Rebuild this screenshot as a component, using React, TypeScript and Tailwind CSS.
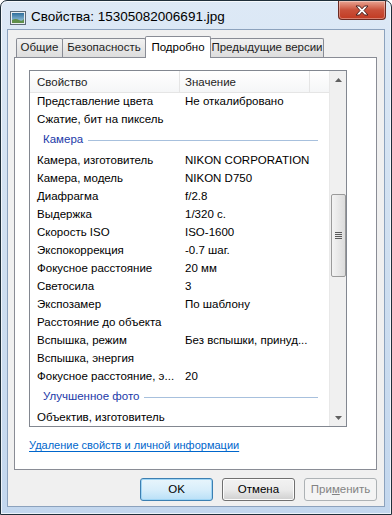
import React from 'react';

type Row = { k?: string; v?: string; group?: string };

const rows: Row[] = [
  { k: 'Представление цвета', v: 'Не откалибровано' },
  { k: 'Сжатие, бит на пиксель', v: '' },
  { group: 'Камера' },
  { k: 'Камера, изготовитель', v: 'NIKON CORPORATION' },
  { k: 'Камера, модель', v: 'NIKON D750' },
  { k: 'Диафрагма', v: 'f/2.8' },
  { k: 'Выдержка', v: '1/320 с.' },
  { k: 'Скорость ISO', v: 'ISO-1600' },
  { k: 'Экспокоррекция', v: '-0.7 шаг.' },
  { k: 'Фокусное расстояние', v: '20 мм' },
  { k: 'Светосила', v: '3' },
  { k: 'Экспозамер', v: 'По шаблону' },
  { k: 'Расстояние до объекта', v: '' },
  { k: 'Вспышка, режим', v: 'Без вспышки, принуд...' },
  { k: 'Вспышка, энергия', v: '' },
  { k: 'Фокусное расстояние, э...', v: '20' },
  { group: 'Улучшенное фото' },
  { k: 'Объектив, изготовитель', v: '' },
];

function FileIcon() {
  return (
    <svg width="16" height="14" viewBox="0 0 16 14">
      <rect x="0.5" y="0.5" width="15" height="13" fill="#e9eef2" stroke="#5d6b78" />
      <defs>
        <linearGradient id="sky" x1="0" y1="0" x2="0" y2="1">
          <stop offset="0" stopColor="#2f6f9c" />
          <stop offset="1" stopColor="#a9d3ea" />
        </linearGradient>
      </defs>
      <rect x="2" y="2" width="12" height="10" fill="url(#sky)" />
      <path d="M2 12 L2 9 Q6 7 9 9 T14 8 L14 12 Z" fill="#5f8f4a" />
    </svg>
  );
}

function CloseButton() {
  return (
    <div className="w-[48px] h-[19px] rounded-b-[4px] border border-t-0 border-[#6b2a22] bg-gradient-to-b from-[#e8a493] via-[#c9503a] to-[#c23a21] flex items-center justify-center shadow-[inset_0_0_0_1px_rgba(255,255,255,0.35)]">
      <svg width="14" height="11" viewBox="0 0 14 11">
        <path
          d="M1 1 H4.5 L7 3.8 L9.5 1 H13 L9 5.5 L13 10 H9.5 L7 7.2 L4.5 10 H1 L5 5.5 Z"
          fill="#ffffff"
          stroke="#4a2220"
          strokeWidth="1"
          strokeLinejoin="round"
        />
      </svg>
    </div>
  );
}

function Scrollbar() {
  return (
    <div className="w-[17px] h-full bg-[#f0f0f0] border-l border-[#e8e8e8] flex flex-col items-center">
      <div className="h-[17px] w-full flex items-center justify-center">
        <svg width="7" height="4" viewBox="0 0 7 4">
          <path d="M0 4 L3.5 0 L7 4 Z" fill="#606060" />
        </svg>
      </div>
      <div className="mt-[106px] w-[15px] h-[83px] rounded-[2px] border border-[#9a9a9a] bg-gradient-to-r from-[#f3f3f3] to-[#dcdcdc] flex flex-col items-center justify-center gap-[1px]">
        <div className="w-[7px] h-[1px] bg-[#5a5a5a]" />
        <div className="w-[7px] h-[1px] bg-[#5a5a5a]" />
        <div className="w-[7px] h-[1px] bg-[#5a5a5a]" />
        <div className="w-[7px] h-[1px] bg-[#5a5a5a]" />
      </div>
      <div className="mt-auto h-[17px] w-full flex items-center justify-center">
        <svg width="7" height="4" viewBox="0 0 7 4">
          <path d="M0 0 L3.5 4 L7 0 Z" fill="#606060" />
        </svg>
      </div>
    </div>
  );
}

function ListView() {
  return (
    <div className="w-[318px] h-[357px] border border-[#828790] bg-white flex overflow-hidden">
      <div className="flex-1 flex flex-col overflow-hidden">
        <div className="h-[22px] shrink-0 flex bg-gradient-to-b from-[#ffffff] to-[#f5f6f7] border-b border-[#e5e5e5] text-[#1e1e1e]">
          <div className="w-[150px] pl-[7px] pt-[3px] flex items-center border-r border-[#e5e5e5]">Свойство</div>
          <div className="w-[130px] pl-[5px] pt-[3px] flex items-center border-r border-[#e5e5e5]">Значение</div>
          <div className="flex-1" />
        </div>
        {rows.map((r, i) =>
          r.group ? (
            <div key={i} className="h-[23px] shrink-0 flex items-center pl-[13px] pr-[11px] pb-[1px] gap-[5px]">
              <span className="text-[#1b39a8]">{r.group}</span>
              <div className="flex-1 h-[1px] bg-[#a7c0dd]" />
            </div>
          ) : (
            <div key={i} className="h-[18px] shrink-0 flex items-center text-black">
              <div className="w-[150px] pl-[7px] whitespace-nowrap">{r.k}</div>
              <div className="pl-[5px] whitespace-nowrap">{r.v}</div>
            </div>
          )
        )}
      </div>
      <Scrollbar />
    </div>
  );
}

export default function App() {
  return (
    <div className="w-[392px] h-[515px] bg-white font-['Liberation_Sans',Arial,sans-serif] text-[11.5px] leading-none">
      <div className="w-full h-full rounded-t-[7px] border border-[#1f2f3a] bg-gradient-to-b from-[#dde9f6] via-[#cfdff0] to-[#c3d7ee] flex flex-col shadow-[inset_0_0_0_1px_rgba(255,255,255,0.7)]">
        <div className="h-[28px] shrink-0 flex items-start">
          <div className="pl-[9px] pt-[10px]">
            <FileIcon />
          </div>
          <div className="pl-[5px] pt-[9px] text-[13.5px] text-black">Свойства: 15305082006691.jpg</div>
          <div className="ml-auto mr-[5px]">
            <CloseButton />
          </div>
        </div>
        <div className="mx-[6px] mb-[7px] flex-1 border border-[#8ca2bd] bg-[#f0f0f0] flex flex-col pl-[6px] pr-[7px] pt-[5px]">
          <div className="flex items-end h-[22px] pl-[2px]">
            <div className="w-[47px] h-[19px] border border-b-0 border-[#898c95] bg-gradient-to-b from-[#f2f2f2] to-[#dddddd] flex items-center justify-center text-[#1e1e1e] rounded-t-[2px]">
              Общие
            </div>
            <div className="w-[84px] h-[19px] -ml-[1px] border border-b-0 border-[#898c95] bg-gradient-to-b from-[#f2f2f2] to-[#dddddd] flex items-center justify-center text-[#1e1e1e] rounded-t-[2px]">
              Безопасность
            </div>
            <div className="w-[66px] h-[22px] -ml-[1px] -mb-[1px] relative z-10 border border-b-0 border-[#898c95] bg-white flex items-center justify-center rounded-t-[2px]">
              Подробно
            </div>
            <div className="w-[114px] h-[19px] -ml-[1px] border border-b-0 border-[#898c95] bg-gradient-to-b from-[#f2f2f2] to-[#dddddd] flex items-center justify-center text-[#1e1e1e] rounded-t-[2px]">
              Предыдущие версии
            </div>
          </div>
          <div className="h-[413px] border border-[#898c95] bg-white pl-[14px] pt-[12px] flex flex-col">
            <ListView />
            <a className="mt-[13px] text-[11px] text-[#0066cc] underline underline-offset-2 decoration-1 w-fit">
              Удаление свойств и личной информации
            </a>
          </div>
          <div className="flex justify-end gap-[9px] mt-[8px]">
            <button className="w-[73px] h-[23px] rounded-[3px] border border-[#3c7fb1] bg-gradient-to-b from-[#e8f5fc] via-[#d8eefb] to-[#b9e0f7] shadow-[inset_0_0_0_1px_#9fd5f5] text-black">
              OK
            </button>
            <button className="w-[73px] h-[23px] rounded-[3px] border border-[#707070] bg-gradient-to-b from-[#f2f2f2] via-[#ebebeb] to-[#cfcfcf] shadow-[inset_0_0_0_1px_#fcfcfc] text-black">
              Отмена
            </button>
            <button className="w-[73px] h-[23px] rounded-[3px] border border-[#adb2b5] bg-[#f4f4f4] text-[#838383]">
              При<span className="underline">м</span>енить
            </button>
          </div>
        </div>
      </div>
    </div>
  );
}
